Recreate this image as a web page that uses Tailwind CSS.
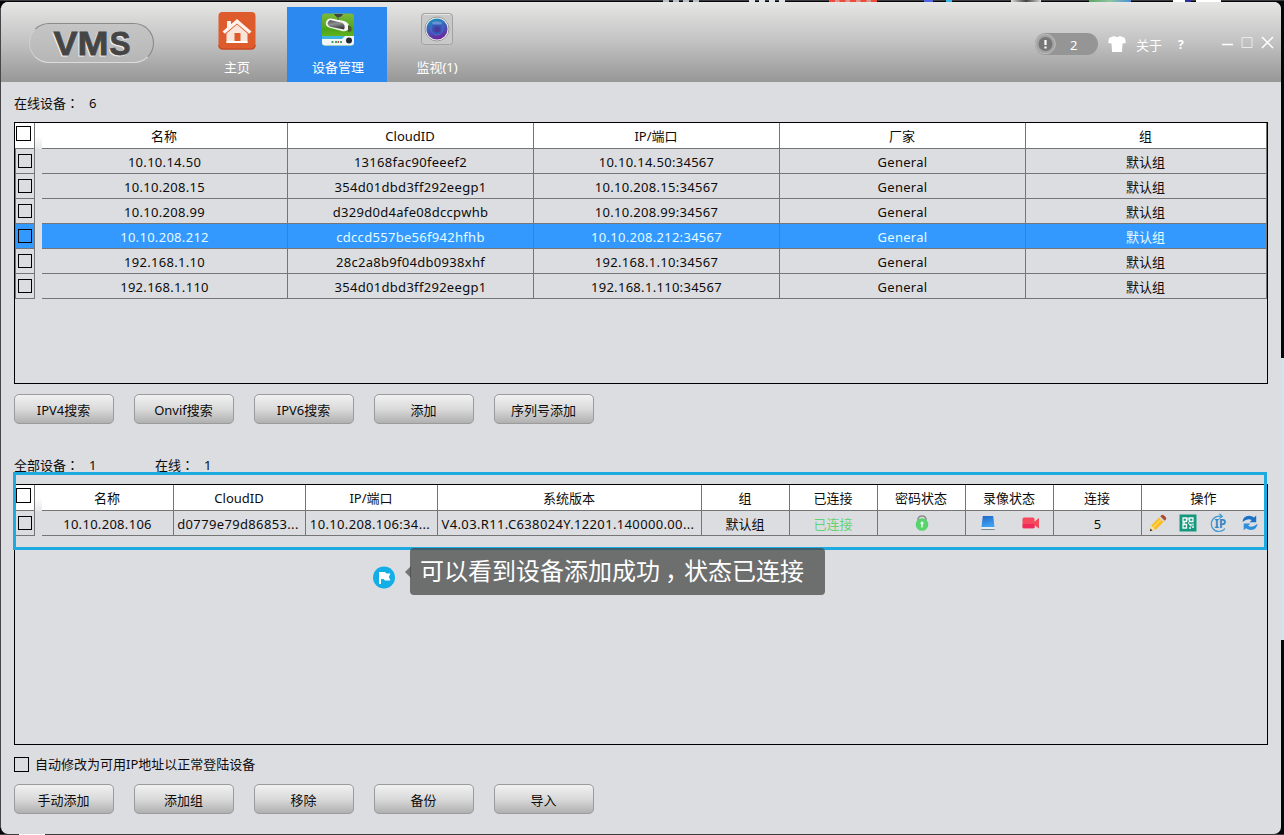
<!DOCTYPE html>
<html lang="zh-CN">
<head>
<meta charset="utf-8">
<title>VMS</title>
<script src="https://cdn.jsdelivr.net/npm/@tailwindcss/browser@4"></script>
</head>
<body class="relative h-[835px] w-[1284px] overflow-hidden bg-[#05060a] pt-[2px] pl-px font-['Noto_Sans','Noto_Sans_CJK_SC',sans-serif] text-[13px] leading-5 text-[#0c0c0c]">
<!-- desktop slivers around the window -->
<div class="absolute inset-x-0 top-0 h-px bg-[#3c3c3e]"></div>
<div class="absolute top-0 left-[663px] h-[2px] w-[36px] border-t-2 border-dashed border-[#b9c0c8]"></div>
<div class="absolute top-0 left-[749px] h-[2px] w-[36px] border-t-2 border-dashed border-[#dde3e8]"></div>
<div class="absolute top-0 left-[829px] h-[2px] w-[48px] border-t-2 border-dashed border-[#f04a3c] bg-[#d8968c]"></div>
<div class="absolute top-0 left-[924px] h-[2px] w-[9px] bg-[#5265e0]"></div>
<div class="absolute top-0 left-[946px] h-[2px] w-[6px] bg-[#34b9ea]"></div>
<div class="absolute top-0 left-[1011px] h-[2px] w-[30px] bg-gradient-to-r from-[#ddd] via-[#444] to-[#ddd]"></div>
<div class="absolute top-0 left-[1089px] h-[2px] w-[42px] bg-gradient-to-r from-[#58a860] via-[#8fc4a0] to-[#4b90d8]"></div>
<div class="absolute top-0 left-[1173px] h-[2px] w-[12px] bg-white"></div>
<div class="absolute top-0 left-[1185px] h-[2px] w-[6px] bg-[#2b2f9c]"></div>
<div class="absolute top-0 left-[1196px] h-[2px] w-[25px] bg-white"></div>
<div class="absolute top-[358px] right-0 h-[282px] w-[3px] bg-[#cfe4f1]"></div>
<div class="absolute bottom-0 left-0 h-px w-[1284px] bg-[#3c3c3e]"></div>
<div class="absolute top-[8px] left-0 h-[820px] w-px bg-[#45454a]"></div>
<div class="absolute bottom-0 left-[19px] h-px w-[26px] bg-white"></div>

<main class="relative flex h-[832px] w-[1280px] flex-col overflow-hidden rounded-[7px] bg-[#dcdde0]">
  <header class="flex h-[80px] shrink-0 bg-gradient-to-b from-[#e6e6e5] via-[#c2c2c2] to-[#979797] text-white">
    <div class="mt-[21px] ml-[28px] flex h-[40px] w-[125px] items-center justify-center rounded-full border border-t-[#8a8a8a] border-r-[#858585] border-b-[#dcdcdc] border-l-[#cfcfcf] bg-[#bdbdbd]/60">
      <svg class="ml-[3px] shrink-0" width="90" height="38" viewBox="0 0 90 38" font-family="Liberation Sans" font-weight="700" font-size="33">
        <g fill="#f0f0f0" stroke="#f0f0f0" stroke-width=".8"><text x="4.500" y="31.500" textLength="24" lengthAdjust="spacingAndGlyphs">V</text><text x="28.500" y="31.500" textLength="31" lengthAdjust="spacingAndGlyphs">M</text><text x="60.500" y="31.500" textLength="21" lengthAdjust="spacingAndGlyphs">S</text></g>
        <g fill="#454545" stroke="#454545" stroke-width=".8"><text x="5.500" y="30.500" textLength="24" lengthAdjust="spacingAndGlyphs">V</text><text x="29.500" y="30.500" textLength="31" lengthAdjust="spacingAndGlyphs">M</text><text x="61.500" y="30.500" textLength="21" lengthAdjust="spacingAndGlyphs">S</text></g>
      </svg>
    </div>
    <nav class="ml-[33px] flex pt-[5px]">
      <a class="flex h-[75px] w-[100px] flex-col items-center pt-[4px]">
        <svg width="40" height="40" viewBox="0 0 40 40"><rect x="1.500" y="1" width="37" height="37" rx="4" fill="#de5c2c"/><path d="M2 34q0 4 4 4h28q4 0 4-4" fill="none" stroke="#c84a20" stroke-width="1.500"/><path d="M5.500 20.500 20 8l14.500 12.500-2.300 2.200L20 12.500 7.800 22.700z" fill="#fff4ed"/><path d="M10 10h4v4l-4 3.500z" fill="#fff4ed"/><path d="M9.500 22.500 20 13.500l10.500 9V32h-7V22h-6v10h-8z" fill="#fae5da"/><path d="M9.500 30h21v2h-21z" fill="#fff"/></svg>
        <span class="mt-[6px]">主页</span>
      </a>
      <a class="flex h-[75px] w-[100px] flex-col items-center bg-[#2c89ef] pt-[5px]">
        <svg class="ml-[2px]" width="36" height="36" viewBox="0 0 36 36"><defs><linearGradient id="grass" x2="0" y2="1"><stop stop-color="#7cb83c"/><stop offset=".5" stop-color="#4ba51b"/><stop offset="1" stop-color="#82c71f"/></linearGradient><linearGradient id="cam" x2=".3" y2="1"><stop stop-color="#4c4f50"/><stop offset=".5" stop-color="#8d9092"/><stop offset="1" stop-color="#3c3f40"/></linearGradient></defs><rect x="2" y="1.500" width="32" height="32" rx="3" fill="url(#grass)"/><path d="M2 24h32v6.500q0 3-3 3H5q-3 0-3-3z" fill="#f2f6f6"/><path d="M2 24h23l-3 3H2z" fill="#3eb5df"/><path d="M14.500 2.500h8l-2 2h-4zM18 4v4" stroke="#444" fill="#444"/><path d="m11 6.500 13 2.500q6 2 5 7-2 4-7 3L9 15.500q-4-1.500-3-5.500 1.500-4 5-3.500z" fill="#f7f7f2"/><path d="m10 8 12 2.700q4 2.300 2 6.800L10 14.800q-5-3.300 0-6.800z" fill="url(#cam)"/><path d="m28 13 3.500 2v4L28 20z" fill="#4a5a35"/><circle cx="29" cy="28.500" r="3" fill="#252b31"/><path d="M11.500 30h2m1.500 0h2m3 0h2" stroke="#42a75b" stroke-width="2"/><path d="M17.500 30H19" stroke="#d45" stroke-width="2"/></svg>
        <span class="mt-[9px] ml-[2px]">设备管理</span>
      </a>
      <a class="flex h-[75px] w-[100px] flex-col items-center pt-[4px]">
        <svg width="36" height="36" viewBox="0 0 36 36"><defs><linearGradient id="lens" x1=".2" x2=".5" y2="1"><stop stop-color="#1596bd"/><stop offset=".45" stop-color="#3d61bb"/><stop offset="1" stop-color="#6d259b"/></linearGradient></defs><rect x="2.500" y="2.500" width="31" height="31" rx="3" fill="#c9c9c9" stroke="#a2a2a2"/><path d="M5 3.500h26" stroke="#e8e8e8"/><circle cx="18" cy="18" r="12" fill="#f4f4f4" stroke="#999"/><circle cx="18" cy="18" r="10.600" fill="url(#lens)"/><circle cx="18" cy="18" r="6" fill="#315ab3" stroke="#5a66d4"/><circle cx="18" cy="18.500" r="3" fill="#4d399e"/><ellipse cx="18" cy="12" rx="5" ry="1.800" fill="#a8c6ee" opacity=".4"/></svg>
        <span class="mt-[10px]">监视(1)</span>
      </a>
    </nav>
    <div class="mt-[31px] ml-auto flex h-[22px] items-center self-start pr-[6px]">
      <div class="flex h-[22px] w-[63px] items-center rounded-full bg-[#959595]">
        <svg class="shrink-0" width="22" height="22" viewBox="0 0 22 22"><circle cx="10.500" cy="11" r="9.800" fill="#a3a3a3" stroke="#bfbfbf"/><circle cx="10.500" cy="11" r="7" fill="#777"/><path d="M10.500 7v5m0 1.500v2" stroke="#fff" stroke-width="2.200"/></svg>
        <span class="mt-[2px] ml-[13px]">2</span>
      </div>
      <svg class="ml-[10px]" width="18" height="18" viewBox="0 0 18 18"><path d="M6 1q3 2 6 0l5 2 .8 5-3.300.5L14 17H4L3.500 8.500.200 8 1 3z" fill="#fff"/></svg>
      <span class="mt-[1px] ml-[10px]">关于</span>
      <span class="mt-[1px] ml-[16px] w-[8px] text-[12px] font-bold">?</span>
      <svg class="mt-[-4px] ml-[35px]" width="54" height="14" viewBox="0 0 54 14" fill="none" stroke="#fff"><path d="M1 9.500h11" stroke-width="1.500"/><path d="M21 2.500h10v10H21z" stroke="#e9e9e9"/><path d="m41 2 11 11m0-11L41 13" stroke-width="1.500"/></svg>
    </div>
  </header>

  <div class="mt-[11px] ml-[13px] flex h-[20px]"><span class="w-[75px]">在线设备<span class="font-['Noto_Sans_CJK_TC']" lang="zh-TW">：</span></span><span>6</span></div>

  <section id="online" class="mt-[9px] ml-[13px] h-[262px] w-[1254px] shrink-0 border border-black"></section>

  <div id="search-actions" class="mt-[10px] ml-[13px] flex h-[30px] gap-[20px]"></div>

  <div class="mt-[31px] ml-[13px] flex h-[20px]"><span class="w-[75px]">全部设备<span class="font-['Noto_Sans_CJK_TC']" lang="zh-TW">：</span></span><span class="w-[66px]">1</span><span class="w-[49px]">在线<span class="font-['Noto_Sans_CJK_TC']" lang="zh-TW">：</span></span><span>1</span></div>

  <section id="all" class="mt-[9px] ml-[13px] h-[261px] w-[1254px] shrink-0 border border-black"></section>

  <label class="mt-[9px] ml-[13px] flex h-[20px] items-center"><span class="h-[15px] w-[15px] border border-black"></span><span class="ml-[6px]">自动修改为可用IP地址以正常登陆设备</span></label>
  <div id="device-actions" class="mt-[10px] ml-[13px] flex h-[30px] gap-[20px]"></div>
</main>

<!-- highlight frame and callout -->
<div class="absolute top-[472px] left-[13px] h-[78px] w-[1254px] border-[3px] border-[#1ea9e1]"></div>
<svg class="absolute top-[565px] left-[372px]" width="24" height="24" viewBox="0 0 24 24"><circle cx="12" cy="12.500" r="11" fill="#12aee8"/><path d="M7 7h6l1.500 1.500H18.500l-1.700 3.500 1.700 3.500H13L11.500 14H9v5H7z" fill="#fff"/></svg>
<svg class="absolute top-[566px] left-[405px]" width="6" height="12"><path d="M6 0v12L0 6z" fill="#757577"/></svg>
<div class="absolute top-[548px] left-[410px] h-[47px] w-[415px] rounded-[4px] bg-[#484848]/75 pl-[10px] font-['Noto_Sans_CJK_SC',sans-serif] text-[24px] leading-[44px] whitespace-nowrap text-white">可以看到设备添加成功<span class="inline-block w-[24px] indent-[5px]">，</span>状态已连接</div>

<script>
const icons = {
lock: '<svg width="16" height="18" viewBox="0 0 16 18"><path d="M4 9V6q0-4 4-4t4 4v3" fill="none" stroke="#8b8f8b" stroke-width="1.600"/><circle cx="8" cy="10.500" r="6.300" fill="#57d46b"/><path d="M8 9v4.500" stroke="#fff" stroke-width="1.300"/><circle cx="8" cy="9" r="1.500" fill="#fff"/></svg>',
rec: '<div class="flex w-full items-center pl-[15px]"><svg class="mt-[-1px] shrink-0" width="14" height="16" viewBox="0 0 14 16"><defs><linearGradient id="scr" x2=".3" y2="1"><stop stop-color="#2068c6"/><stop offset="1" stop-color="#3fa0f2"/></linearGradient></defs><path d="M1.800 1h10.400l1.300 11H.5z" fill="url(#scr)"/><path d="M.3 12h13.400v2.500H.3z" fill="#e4edf4"/><path d="M.3 14.500h13.400" stroke="#7d8790"/></svg><svg class="ml-[27px] shrink-0" width="18" height="14" viewBox="0 0 18 14"><rect x=".5" y="1.500" width="12" height="11" rx="1.500" fill="#f64a5c"/><path d="m12 6 5-4v10.500L12 9z" fill="#f64a5c"/><path d="M.7 8h11.800v4H.7z" fill="#f02a5a"/></svg></div>',
ops: '<div class="flex w-full items-center pl-[7px]"><svg width="18" height="18" viewBox="0 0 18 18"><path d="m1 17 1.200-5.500 8.300-8.500 4.500 4.500L6.500 16z" fill="#f9bd22"/><path d="m4 13.500 8.500-8.500" stroke="#ffd65a" stroke-width="1.500"/><path d="m1 17 1.200-5.500L6.500 16z" fill="#f7dfb0"/><path d="m.8 17.200.8-2.600 1.900 1.800z" fill="#333"/><path d="m10 3.700 1.500-1.500L16 6.500 14.500 8z" fill="#d9d3cc"/><path d="m11.300 2.300 1-1Q13.500 0 15 1.500L16.700 3q1.300 1.500 0 2.700l-.9 1z" fill="#a84b34"/></svg>'
 + '<svg class="ml-[12px]" width="18" height="18" viewBox="0 0 18 18"><path d="M.5.5h17v17H.5z" fill="#16987e"/><g fill="none" stroke="#eefaf5" stroke-width="1.300"><path d="M4 4h3.500v3.500H4zM10.500 4H14v3.500h-3.500zM4 10.500h3.500V14H4z"/><path d="M10 10.500h2v2m2-3v2m-4 2.500h2m1-1h2M9 3.500v3M3.500 9H6m3 0h1"/></g></svg>'
 + '<svg class="ml-[13px]" width="18" height="20" viewBox="0 0 18 20"><g fill="none" stroke="#3b9bd5" stroke-width="1.200"><path d="M6 3.900A7.600 7.600 0 1 0 15 15.500M6 3.900q3-1.200 6-.4M9.500.7l2.800 2.700-3 2.200"/></g><text x="4.500" y="15.300" font-family="Noto Sans" font-weight="700" font-size="11.500" fill="#3287c4" textLength="12">IP</text></svg>'
 + '<svg class="ml-[13px]" width="18" height="18" viewBox="0 0 18 18"><path d="M1.500 8Q2 2 8 1.800q3 0 5 1.700l2.200-2V8.300H8.700l2.100-2.300Q6.500 3.600 1.500 8z" fill="#1972c5"/><path d="M16.500 9.700Q16 15.800 10 16q-3 0-5-1.700L2.700 16.300V9.500h6.600l-2.100 2.300q4.300 2.400 9.300-2.100z" fill="#2e8fd9"/></svg></div>'
};
function table(id, cols, rows, selected) {
  let h = '<div class="flex h-[26px] bg-white"><div class="w-[20px] shrink-0 border-r border-b border-[#757575] pt-[3px] pl-px"><div class="h-[15px] w-[15px] border border-black"></div></div><div class="w-[7px] shrink-0 bg-gradient-to-b from-white via-white to-[#e6e7e9]"></div>';
  const cell = (t, w, cls) => '<div class="flex shrink-0 items-center justify-center overflow-hidden whitespace-nowrap border-r border-b border-[#757575] ' + cls + '" style="width:' + w + 'px">' + t + '</div>';
  cols.forEach(c => h += cell('<span class="mr-px">' + c[0] + '</span>', c[1], ''));
  h += '</div>';
  rows.forEach((r, i) => {
    const on = i === selected;
    h += '<div class="flex h-[25px]"><div class="w-[20px] shrink-0 border-x border-b border-[#757575] pt-[5px] pl-[2px] ' + (on ? 'bg-[#3399ff]' : '') + '"><div class="h-[14px] w-[14px] border border-black"></div></div><div class="w-[7px] shrink-0"></div>';
    r.forEach((t, j) => {
      const latin = /^[\x20-\x7e]+$/.test(t);
      const clipped = t.endsWith('...');
      h += cell(icons[t] || '<span class="pt-px ' + (clipped ? 'mr-[3px] tracking-[.35px]' : latin ? '' : 'mr-px') + '">' + t + '</span>', cols[j][1], (latin ? 'tracking-[.3px] ' : '') + (on ? 'bg-[#3399ff] text-[#e4fbff]' : t === '已连接' ? 'text-[#5fd474]' : ''));
    });
    h += '</div>';
  });
  document.getElementById(id).innerHTML = h;
}
table('online', [['名称',246],['CloudID',246],['IP/端口',246],['厂家',246],['组',241]], [
 ['10.10.14.50','13168fac90feeef2','10.10.14.50:34567','General','默认组'],
 ['10.10.208.15','354d01dbd3ff292eegp1','10.10.208.15:34567','General','默认组'],
 ['10.10.208.99','d329d0d4afe08dccpwhb','10.10.208.99:34567','General','默认组'],
 ['10.10.208.212','cdccd557be56f942hfhb','10.10.208.212:34567','General','默认组'],
 ['192.168.1.10','28c2a8b9f04db0938xhf','192.168.1.10:34567','General','默认组'],
 ['192.168.1.110','354d01dbd3ff292eegp1','192.168.1.110:34567','General','默认组']], 3);
table('all', [['名称',132],['CloudID',132],['IP/端口',132],['系统版本',264],['组',88],['已连接',88],['密码状态',88],['录像状态',88],['连接',88],['操作',125]],
 [['10.10.208.106','d0779e79d86853...','10.10.208.106:34...','V4.03.R11.C638024Y.12201.140000.00...','默认组','已连接','lock','rec','5','ops']], -1);
function buttons(id, names) {
  document.getElementById(id).innerHTML = names.map(n => '<button class="h-[30px] w-[100px] rounded-[5px] border border-[#9b9b9b] bg-gradient-to-b from-[#f1f1f1] via-[#dadada] to-[#b0b0b0] pt-px pr-px leading-[26px]">' + n + '</button>').join('');
}
buttons('search-actions', ['IPV4搜索','Onvif搜索','IPV6搜索','添加','序列号添加']);
buttons('device-actions', ['手动添加','添加组','移除','备份','导入']);
</script>
</body>
</html>
